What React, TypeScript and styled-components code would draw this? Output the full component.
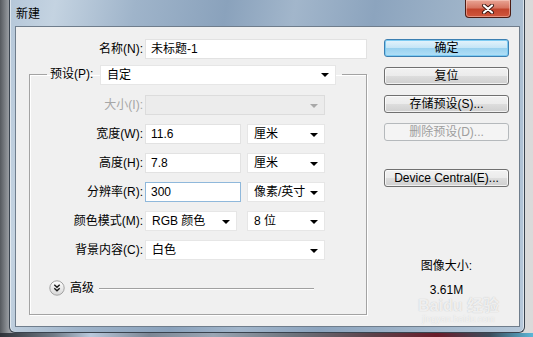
import React from 'react';
import styled, {createGlobalStyle} from 'styled-components';

const GlobalStyle = createGlobalStyle`
    html, body {
        margin: 0;
        padding: 0;
    }
    body {
        width: 533px;
        height: 337px;
        overflow: hidden;
        background: linear-gradient(to right, #55595e 0px, #9a9ea3 9px, #d4d6d8 60%, #dadada 100%);
        font-family: "Liberation Sans", "Noto Sans CJK SC", sans-serif;
        font-size: 12px;
        color: #000;
    }
`

const CloseIcon = () => (
    <svg width="14" height="10" viewBox="0 0 14 10">
        <path d="M3 1.5 L11 8.5 M11 1.5 L3 8.5" stroke="#3a1610" strokeWidth="4" strokeLinecap="round"/>
        <path d="M3 1.5 L11 8.5 M11 1.5 L3 8.5" stroke="#fff" strokeWidth="2.2" strokeLinecap="round"/>
    </svg>
)

const ChevronIcon = () => (
    <svg width="16" height="16" viewBox="0 0 16 16">
        <defs>
            <linearGradient id="chev" x1="0" y1="0" x2="0" y2="1">
                <stop offset="0" stopColor="#ffffff"/>
                <stop offset="1" stopColor="#d6d6d6"/>
            </linearGradient>
        </defs>
        <circle cx="8" cy="8" r="7.2" fill="url(#chev)" stroke="#a2a2a2"/>
        <path d="M5.3 4.8 L8 7.3 L10.7 4.8 M5.3 8.3 L8 10.8 L10.7 8.3" fill="none" stroke="#1a1a1a" strokeWidth="1.4"/>
    </svg>
)

const Select = ({value, width, disabled}: {value?: string; width: number; disabled?: boolean}) => (
    <SelectBox $width={width} $disabled={disabled}>
        <span>{value}</span>
        <Arrow $disabled={disabled}/>
    </SelectBox>
)

export default function App() {
    return (
        <>
            <GlobalStyle/>
            <Window>
                <TitleBar>
                    <Title>新建</Title>
                    <CloseButton><CloseIcon/></CloseButton>
                </TitleBar>
                <Client>
                    <FormColumn>
                        <NameRow>
                            <Label>名称(N):</Label>
                            <TextInput $width={222}>未标题-1</TextInput>
                        </NameRow>
                        <Group>
                            <Legend>
                                <LegendLabel>预设(P):</LegendLabel>
                                <Select value="自定" width={236}/>
                            </Legend>
                            <Fields>
                                <Label $disabled>大小(I):</Label>
                                <Select width={180} disabled/>

                                <Label>宽度(W):</Label>
                                <Pair>
                                    <TextInput $width={96}>11.6</TextInput>
                                    <Select value="厘米" width={78}/>
                                </Pair>

                                <Label>高度(H):</Label>
                                <Pair>
                                    <TextInput $width={96}>7.8</TextInput>
                                    <Select value="厘米" width={78}/>
                                </Pair>

                                <Label>分辨率(R):</Label>
                                <Pair>
                                    <TextInput $width={96} $focused>300</TextInput>
                                    <Select value="像素/英寸" width={78}/>
                                </Pair>

                                <Label>颜色模式(M):</Label>
                                <Pair>
                                    <Select value="RGB 颜色" width={92}/>
                                    <Select value="8 位" width={78}/>
                                </Pair>

                                <Label>背景内容(C):</Label>
                                <Select value="白色" width={180}/>
                            </Fields>
                            <Advanced>
                                <ChevronIcon/>
                                <AdvancedText>高级</AdvancedText>
                                <Rule/>
                            </Advanced>
                        </Group>
                    </FormColumn>
                    <ButtonColumn>
                        <Button $primary>确定</Button>
                        <Button>复位</Button>
                        <Button>存储预设(S)...</Button>
                        <Button $disabled>删除预设(D)...</Button>
                        <Button $gap={28}>Device Central(E)...</Button>
                        <Info>
                            <span>图像大小:</span>
                            <span>3.61M</span>
                        </Info>
                    </ButtonColumn>
                    <Watermark>
                        <WatermarkLogo>Bai<b>du</b> 经验</WatermarkLogo>
                        <WatermarkUrl>jingyan.baidu.com</WatermarkUrl>
                    </Watermark>
                </Client>
            </Window>
            <Taskbar/>
        </>
    );
}

const Window = styled.div`
    box-sizing: border-box;
    width: 516px;
    height: 333px;
    margin-left: 9px;
    padding: 0 4px 5px 5px;
    border: 1px solid #39434e;
    border-top: none;
    border-radius: 0 0 6px 6px;
    background: linear-gradient(100deg, #b5c7d9 0%, #c4d3e1 8%, #9fb4ca 22%, #8aa2bc 38%, #a2b6cb 50%, #8ca4be 64%, #9fb4c9 80%, #b6c8da 100%);
    box-shadow: inset 1px 0 0 rgba(255, 255, 255, .55), inset -1px 0 0 rgba(255, 255, 255, .55);
    display: flex;
    flex-direction: column;
`

const TitleBar = styled.div`
    height: 26px;
    display: flex;
    align-items: flex-start;
`

const Title = styled.span`
    padding: 6px 0 0 1px;
    font-family: "Noto Sans CJK SC", sans-serif;
    font-size: 12px;
    line-height: 14px;
    color: #000;
`

const CloseButton = styled.div`
    box-sizing: border-box;
    width: 46px;
    height: 18px;
    margin: 0 9px 0 auto;
    border: 1px solid #4c1c14;
    border-top: none;
    border-radius: 0 0 4px 4px;
    background: linear-gradient(#e9a595 0%, #d77561 45%, #c2442c 55%, #d0573d 100%);
    box-shadow: inset 0 0 0 1px rgba(255, 220, 210, .45);
    display: flex;
    align-items: center;
    justify-content: center;
`

const Client = styled.div`
    position: relative;
    overflow: hidden;
    flex: 1;
    display: flex;
    background: #f0f0f0;
    border: 1px solid #6f7d8c;
`

const FormColumn = styled.div`
    width: 354px;
    padding-top: 12px;
`

const NameRow = styled.div`
    display: grid;
    grid-template-columns: 127px 222px;
    column-gap: 2px;
`

const Label = styled.span<{ $disabled?: boolean }>`
    text-align: right;
    white-space: nowrap;
    line-height: 20px;
    color: ${p => p.$disabled ? '#a6a6a6' : '#000'};
`

const TextInput = styled.div<{ $width: number; $focused?: boolean }>`
    box-sizing: border-box;
    width: ${p => p.$width}px;
    height: 20px;
    padding: 0 5px;
    line-height: 18px;
    background: #fff;
    border: 1px solid ${p => p.$focused ? '#8fb8db' : '#e2e2e2'};
`

const SelectBox = styled.div<{ $width: number; $disabled?: boolean }>`
    box-sizing: border-box;
    width: ${p => p.$width}px;
    height: 20px;
    padding: 0 6px 0 6px;
    display: flex;
    align-items: center;
    justify-content: space-between;
    white-space: nowrap;
    line-height: 18px;
    background: ${p => p.$disabled ? '#ececec' : '#fff'};
    border: 1px solid ${p => p.$disabled ? '#dcdcdc' : '#e6e6e6'};
`

const Arrow = styled.span<{ $disabled?: boolean }>`
    width: 0;
    height: 0;
    border-left: 4px solid transparent;
    border-right: 4px solid transparent;
    border-top: 4px solid ${p => p.$disabled ? '#a8a8a8' : '#000'};
    margin-top: 1px;
`

const Group = styled.fieldset`
    box-sizing: border-box;
    width: 338px;
    min-width: 0;
    margin: 5px 0 0 13px;
    padding: 10px 0 18px 0;
    border: 1px solid #a3a3a3;
    box-shadow: inset 1px 1px 0 #fff, 1px 1px 0 #fff;
`

const Legend = styled.legend`
    margin-left: 17px;
    padding: 0 6px 0 3px;
    display: flex;
    align-items: center;
    gap: 4px;
`

const LegendLabel = styled.span`
    width: 46px;
    white-space: nowrap;
    line-height: 21px;
`

const Fields = styled.div`
    display: grid;
    grid-template-columns: 113px 180px;
    column-gap: 2px;
    row-gap: 9px;
`

const Pair = styled.div`
    display: flex;
    justify-content: space-between;
`

const Advanced = styled.div`
    margin-top: 20px;
    padding-left: 19px;
    display: flex;
    align-items: center;
    height: 16px;
`

const AdvancedText = styled.span`
    margin-left: 5px;
    line-height: 16px;
`

const Rule = styled.div`
    width: 215px;
    height: 1px;
    margin-left: 5px;
    background: #a0a0a0;
    box-shadow: 0 1px 0 #fff;
`

const ButtonColumn = styled.div`
    width: 125px;
    padding: 12px 0 0 14px;
    display: flex;
    flex-direction: column;
`

const Button = styled.div<{ $primary?: boolean; $disabled?: boolean; $gap?: number }>`
    box-sizing: border-box;
    width: 125px;
    height: 18px;
    margin-bottom: 10px;
    margin-top: ${p => p.$gap ? p.$gap - 10 : 0}px;
    border-radius: 3px;
    text-align: center;
    line-height: 16px;
    white-space: nowrap;
    color: ${p => p.$disabled ? '#9e9e9e' : '#000'};
    border: 1px solid ${p => p.$primary ? '#3c7fb1' : p.$disabled ? '#b5b9bc' : '#707070'};
    background: ${p => p.$primary
        ? 'linear-gradient(#e5f4fc 0%, #c4e5f6 50%, #98d1ef 51%, #b3e0f7 100%)'
        : p.$disabled
            ? '#f4f4f4'
            : 'linear-gradient(#f2f2f2 0%, #ebebeb 50%, #dddddd 51%, #cfcfcf 100%)'};
    box-shadow: ${p => p.$primary ? 'inset 0 0 0 1px #7ccbf2' : p.$disabled ? 'none' : 'inset 0 0 0 1px rgba(255,255,255,.7)'};
`

const Info = styled.div`
    margin-top: 62px;
    display: flex;
    flex-direction: column;
    align-items: center;
    gap: 10px;
    line-height: 14px;
`

const Watermark = styled.div`
    position: absolute;
    left: 402px;
    top: 271px;
    display: flex;
    flex-direction: column;
    align-items: center;
    pointer-events: none;
`

const WatermarkLogo = styled.span`
    font-family: "Liberation Sans", "Noto Sans CJK SC", sans-serif;
    font-size: 16px;
    font-weight: bold;
    line-height: 16px;
    color: rgba(255, 255, 255, .75);
    text-shadow: 0 0 1px rgba(120, 120, 120, .45);
    b {
        font-weight: bold;
    }
`

const WatermarkUrl = styled.span`
    font-size: 9px;
    line-height: 10px;
    color: rgba(255, 255, 255, .7);
    text-shadow: 0 0 1px rgba(140, 140, 140, .35);
`

const Taskbar = styled.div`
    height: 4px;
    background: linear-gradient(to right, #2e3238 0%, #6f7a86 10%, #b9c9dc 17%, #7b8694 28%, #9aa6b4 40%, #6c737c 55%, #5b4048 70%, #6a1c2a 82%, #3b4d5c 92%, #5bb7d8 100%);
`
